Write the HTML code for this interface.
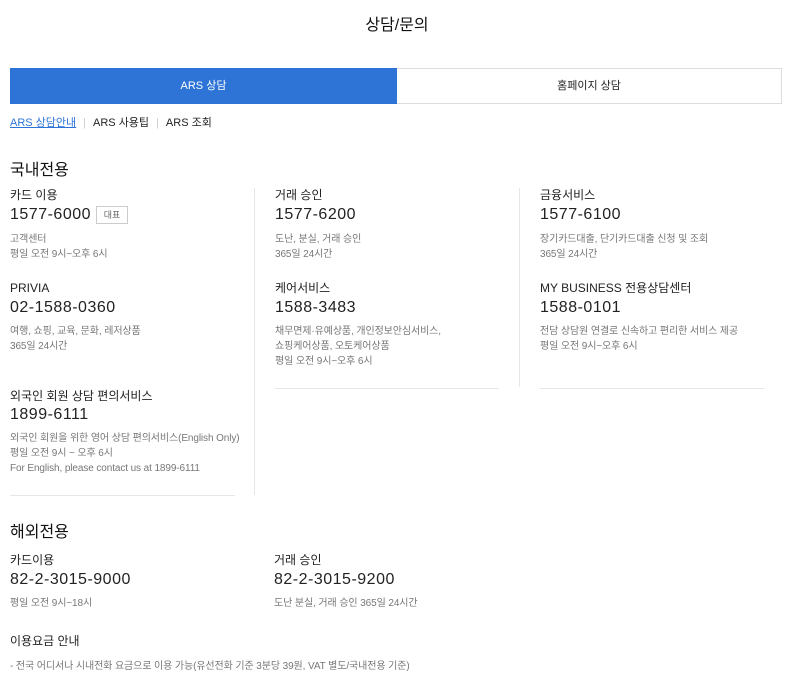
<!DOCTYPE html>
<html><head><meta charset="utf-8"><style>
body{margin:0;width:794px;height:674px;background:#fff;font-family:"Liberation Sans","Noto Sans CJK KR",sans-serif;color:#222;position:relative;overflow:hidden}
.a{position:absolute;white-space:nowrap}
.t{font-size:16px;color:#111;line-height:20px}
.l{font-size:12px;color:#222;line-height:16px}
.n{font-size:16px;color:#222;line-height:20px;letter-spacing:0.5px}
.d{font-size:10px;color:#777;line-height:15px;letter-spacing:-0.1px}
.vl{position:absolute;width:1px;background:#e6e6e6}
.hl{position:absolute;height:1px;background:#e6e6e6}
</style></head><body>
<div class="a t" style="left:0;width:794px;text-align:center;top:16px">상담/문의</div>
<div class="a" style="left:10px;top:68px;width:387px;height:36px;background:#2d74d6;color:#fff;font-size:11px;line-height:36px;text-align:center">ARS 상담</div>
<div class="a" style="left:397px;top:68px;width:384px;height:34px;border:1px solid #ddd;border-left:none;font-size:11px;line-height:34px;text-align:center;color:#222">홈페이지 상담</div>
<div class="a" style="left:10px;top:116px;font-size:11px;line-height:14px"><span style="color:#2d74d6;text-decoration:underline">ARS 상담안내</span><span style="color:#ccc;margin:0 7px">|</span>ARS 사용팁<span style="color:#ccc;margin:0 7px">|</span>ARS 조회</div>

<div class="a t" style="left:10px;top:161px">국내전용</div>
<div class="vl" style="left:254px;top:188px;height:307px"></div>
<div class="vl" style="left:519px;top:188px;height:199px"></div>

<div class="a l" style="left:10px;top:187px">카드 이용</div>
<div class="a n" style="left:10px;top:205px">1577-6000</div>
<div class="a" style="left:96px;top:206px;width:30px;height:16px;border:1px solid #ccc;font-size:9px;line-height:16px;text-align:center;color:#666">대표</div>
<div class="a d" style="left:10px;top:232px">고객센터<br>평일 오전 9시~오후 6시</div>

<div class="a l" style="left:275px;top:187px">거래 승인</div>
<div class="a n" style="left:275px;top:205px">1577-6200</div>
<div class="a d" style="left:275px;top:232px">도난, 분실, 거래 승인<br>365일 24시간</div>

<div class="a l" style="left:540px;top:187px">금융서비스</div>
<div class="a n" style="left:540px;top:205px">1577-6100</div>
<div class="a d" style="left:540px;top:232px">장기카드대출, 단기카드대출 신청 및 조회<br>365일 24시간</div>

<div class="a l" style="left:10px;top:280px">PRIVIA</div>
<div class="a n" style="left:10px;top:298px">02-1588-0360</div>
<div class="a d" style="left:10px;top:324px">여행, 쇼핑, 교육, 문화, 레저상품<br>365일 24시간</div>

<div class="a l" style="left:275px;top:280px">케어서비스</div>
<div class="a n" style="left:275px;top:298px">1588-3483</div>
<div class="a d" style="left:275px;top:324px">채무면제·유예상품, 개인정보안심서비스,<br>쇼핑케어상품, 오토케어상품<br>평일 오전 9시~오후 6시</div>
<div class="hl" style="left:275px;top:388px;width:224px"></div>

<div class="a l" style="left:540px;top:280px">MY BUSINESS 전용상담센터</div>
<div class="a n" style="left:540px;top:298px">1588-0101</div>
<div class="a d" style="left:540px;top:324px">전담 상담원 연결로 신속하고 편리한 서비스 제공<br>평일 오전 9시~오후 6시</div>
<div class="hl" style="left:540px;top:388px;width:224px"></div>

<div class="a l" style="left:10px;top:388px">외국인 회원 상담 편의서비스</div>
<div class="a n" style="left:10px;top:405px">1899-6111</div>
<div class="a d" style="left:10px;top:431px">외국인 회원을 위한 영어 상담 편의서비스(English Only)<br>평일 오전 9시 ~ 오후 6시<br>For English, please contact us at 1899-6111</div>
<div class="hl" style="left:10px;top:495px;width:225px"></div>

<div class="a t" style="left:10px;top:523px">해외전용</div>
<div class="a l" style="left:10px;top:552px">카드이용</div>
<div class="a n" style="left:10px;top:570px">82-2-3015-9000</div>
<div class="a d" style="left:10px;top:596px">평일 오전 9시~18시</div>
<div class="a l" style="left:274px;top:552px">거래 승인</div>
<div class="a n" style="left:274px;top:570px">82-2-3015-9200</div>
<div class="a d" style="left:274px;top:596px">도난 분실, 거래 승인 365일 24시간</div>

<div class="a l" style="left:10px;top:633px">이용요금 안내</div>
<div class="a d" style="left:10px;top:659px">- 전국 어디서나 시내전화 요금으로 이용 가능(유선전화 기준 3분당 39원, VAT 별도/국내전용 기준)</div>
</body></html>
